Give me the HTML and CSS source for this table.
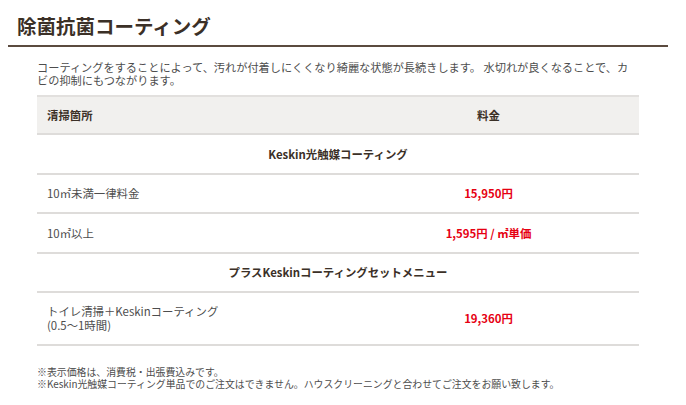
FILE: index.html
```html
<!DOCTYPE html>
<html lang="ja">
<head>
<meta charset="utf-8">
<link rel="stylesheet" href="styles.css">
</head>
<body>
<section class="section">
  <h2 class="title">除菌抗菌コーティング</h2>
  <div class="content">
    <p class="lead">コーティングをすることによって、汚れが付着しにくくなり綺麗な状態が長続きします。 水切れが良くなることで、カビの抑制にもつながります。</p>
    <table class="price">
      <thead>
        <tr><th class="col-l">清掃箇所</th><th class="col-r">料金</th></tr>
      </thead>
      <tbody>
        <tr><td class="group" colspan="2">Keskin光触媒コーティング</td></tr>
        <tr><td class="col-l">10㎡未満一律料金</td><td class="col-r red">15,950円</td></tr>
        <tr><td class="col-l">10㎡以上</td><td class="col-r red">1,595円 / ㎡単価</td></tr>
        <tr><td class="group" colspan="2">プラスKeskinコーティングセットメニュー</td></tr>
        <tr class="tall"><td class="col-l">トイレ清掃＋Keskinコーティング<br>(0.5～1時間)</td><td class="col-r red">19,360円</td></tr>
      </tbody>
    </table>
    <p class="notes">※表示価格は、消費税・出張費込みです。<br>※Keskin光触媒コーティング単品でのご注文はできません。ハウスクリーニングと合わせてご注文をお願い致します。</p>
  </div>
</section>
</body>
</html>
```

FILE: styles.css
```css
html, body {
  margin: 0;
  padding: 0;
  background: #fff;
}
body {
  padding: 8px;
  font-family: "Noto Sans CJK JP", "Noto Sans", sans-serif;
  color: #4d4d4d;
}
.section {
  width: 660px;
}
.title {
  margin: 0;
  padding: 5px 0 6px 9px;
  font-size: 19.5px;
  line-height: 26px;
  font-weight: 700;
  color: #3b3027;
  border-bottom: 2px solid #5b4b3f;
}
.content {
  padding-left: 29px;
  width: 602px;
}
.lead {
  margin: 14px 0 9px;
  font-size: 11.2px;
  line-height: 12.5px;
  color: #4d4d4d;
}
.price {
  width: 602px;
  border-collapse: collapse;
  font-size: 11.4px;
  border-top: 2px solid #e2e0de;
}
.price th, .price td {
  height: 37.5px;
  padding: 0 10px;
  border-bottom: 2px solid #dedcda;
  vertical-align: middle;
}
.price thead th {
  background: #f1f0ee;
  font-weight: 700;
  color: #3b3027;
  height: 36px;
}
.col-l {
  width: 50%;
  text-align: left;
}
.col-r {
  text-align: center;
}
.group {
  text-align: center;
  font-weight: 700;
  color: #3b3027;
}
.price td {
  line-height: 14px;
}
.tall td {
  height: 51px;
  line-height: 13.5px;
}
.red {
  color: #e60012;
  font-weight: 700;
}
.notes {
  margin: 21px 0 0;
  font-size: 9.9px;
  line-height: 11.5px;
  color: #4d4d4d;
}
```
